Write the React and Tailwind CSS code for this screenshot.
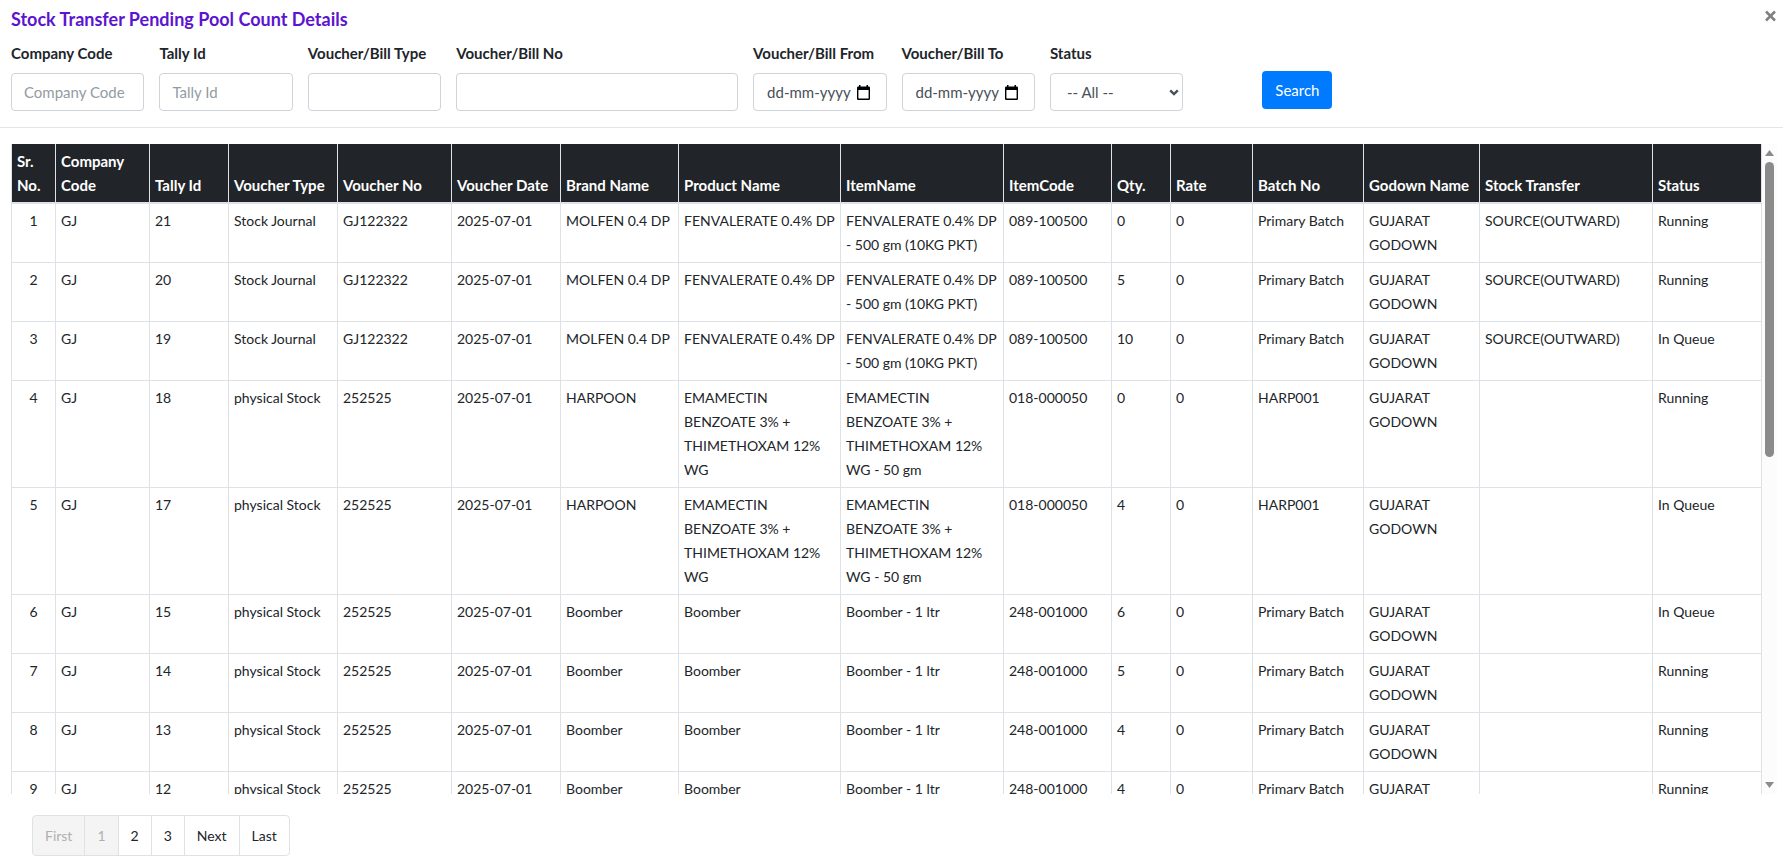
import React from "react";

const columns = [
  ["Sr. No.", "w-[44px]"],
  ["Company Code", "w-[94px]"],
  ["Tally Id", "w-[79px]"],
  ["Voucher Type", "w-[109px]"],
  ["Voucher No", "w-[114px]"],
  ["Voucher Date", "w-[109px]"],
  ["Brand Name", "w-[118px]"],
  ["Product Name", "w-[162px]"],
  ["ItemName", "w-[163px]"],
  ["ItemCode", "w-[108px]"],
  ["Qty.", "w-[59px]"],
  ["Rate", "w-[82px]"],
  ["Batch No", "w-[111px]"],
  ["Godown Name", "w-[116px]"],
  ["Stock Transfer", "w-[173px]"],
  ["Status", "w-[109px]"],
];

const FEN = ["MOLFEN 0.4 DP", "FENVALERATE 0.4% DP", "FENVALERATE 0.4% DP - 500 gm (10KG PKT)", "089-100500"];
const HARP = [
  "HARPOON",
  "EMAMECTIN BENZOATE 3% + THIMETHOXAM 12% WG",
  "EMAMECTIN BENZOATE 3% + THIMETHOXAM 12% WG - 50 gm",
  "018-000050",
];
const BOOM = ["Boomber", "Boomber", "Boomber - 1 ltr", "248-001000"];
const DATE = "2025-07-01";
const GODOWN = "GUJARAT GODOWN";
const OUT = "SOURCE(OUTWARD)";

const rows = [
  ["1", "GJ", "21", "Stock Journal", "GJ122322", DATE, ...FEN, "0", "0", "Primary Batch", GODOWN, OUT, "Running"],
  ["2", "GJ", "20", "Stock Journal", "GJ122322", DATE, ...FEN, "5", "0", "Primary Batch", GODOWN, OUT, "Running"],
  ["3", "GJ", "19", "Stock Journal", "GJ122322", DATE, ...FEN, "10", "0", "Primary Batch", GODOWN, OUT, "In Queue"],
  ["4", "GJ", "18", "physical Stock", "252525", DATE, ...HARP, "0", "0", "HARP001", GODOWN, "", "Running"],
  ["5", "GJ", "17", "physical Stock", "252525", DATE, ...HARP, "4", "0", "HARP001", GODOWN, "", "In Queue"],
  ["6", "GJ", "15", "physical Stock", "252525", DATE, ...BOOM, "6", "0", "Primary Batch", GODOWN, "", "In Queue"],
  ["7", "GJ", "14", "physical Stock", "252525", DATE, ...BOOM, "5", "0", "Primary Batch", GODOWN, "", "Running"],
  ["8", "GJ", "13", "physical Stock", "252525", DATE, ...BOOM, "4", "0", "Primary Batch", GODOWN, "", "Running"],
  ["9", "GJ", "12", "physical Stock", "252525", DATE, ...BOOM, "4", "0", "Primary Batch", GODOWN, "", "Running"],
];

const control =
  "h-[38px] w-full rounded border border-[#ced4da] bg-white px-3 text-[#495057] placeholder:text-[#939ba2] outline-none focus:border-[#80bdff]";

function Field({ id, label, className = "", children }) {
  return (
    <div className={`flex min-w-0 flex-col gap-2 ${className}`}>
      <label htmlFor={id} className="whitespace-nowrap font-bold leading-6">
        {label}
      </label>
      {children}
    </div>
  );
}

function CalendarIcon() {
  return (
    <svg width="13" height="15" viewBox="0 0 13 15" aria-hidden="true">
      <path
        d="M2 0h1.500v1.500h6V0H11v1.500h.8A1.200 1.200 0 0 1 13 2.700v11.100A1.200 1.200 0 0 1 11.800 15H1.200A1.200 1.200 0 0 1 0 13.800V2.700A1.200 1.200 0 0 1 1.200 1.500H2zM1.400 5v8.600h10.200V5z"
        fill="#000"
        fillRule="evenodd"
      />
    </svg>
  );
}

function DateField({ id, label }) {
  return (
    <Field id={id} label={label}>
      <div className="flex h-[38px] items-center rounded border border-[#ced4da] bg-white pr-3 pl-[13px]">
        <input
          id={id}
          type="text"
          placeholder="dd-mm-yyyy"
          className="w-full min-w-0 bg-transparent text-[15px] text-[#495057] outline-none placeholder:text-[#495057]"
        />
        <button type="button" aria-label={`Choose ${label}`} className="shrink-0 pr-1">
          <CalendarIcon />
        </button>
      </div>
    </Field>
  );
}

function SelectField() {
  return (
    <Field id="status" label="Status">
      <div className="grid items-center">
        <select id="status" className={`${control} col-start-1 row-start-1 appearance-none pl-4`}>
          <option>-- All --</option>
          <option>Running</option>
          <option>In Queue</option>
        </select>
        <svg
          className="pointer-events-none col-start-1 row-start-1 mr-1 justify-self-end"
          width="10"
          height="7"
          viewBox="0 0 10 7"
          aria-hidden="true"
        >
          <path d="M1.200 1.300 5 5 8.800 1.300" fill="none" stroke="#495057" strokeWidth="2.400" />
        </svg>
      </div>
    </Field>
  );
}

function ScrollRail() {
  return (
    <div className="flex w-[15px] shrink-0 flex-col items-center bg-[#fcfcfc] py-[6px]" aria-hidden="true">
      <svg width="9" height="6" viewBox="0 0 9 6">
        <path d="M4.500 0 9 6H0z" fill="#8b8b8b" />
      </svg>
      <div className="my-[6px] flex w-[9px] flex-1 flex-col">
        <div className="h-[48%] rounded-full bg-[#8b8b8b]" />
      </div>
      <svg width="9" height="6" viewBox="0 0 9 6">
        <path d="M4.500 6 9 0H0z" fill="#8b8b8b" />
      </svg>
    </div>
  );
}

const pages = [
  ["First", true],
  ["1", true],
  ["2", false],
  ["3", false],
  ["Next", false],
  ["Last", false],
];

export default function App() {
  return (
    <div className="flex h-screen flex-col overflow-hidden bg-white font-['Lato','Liberation_Sans',sans-serif] text-[15px] leading-6 text-[#212529]">
      <header className="flex items-start justify-between pt-[5px] pr-[7px] pl-[11px]">
        <h1 className="text-lg leading-7 font-bold text-[#5c14cf]">Stock Transfer Pending Pool Count Details</h1>
        <button type="button" aria-label="Close" className="mt-[5px]">
          <svg width="11" height="12" viewBox="0 0 11 12" aria-hidden="true">
            <path d="M1 1.500 10 10.500M10 1.500 1 10.500" stroke="#808080" strokeWidth="2.500" />
          </svg>
        </button>
      </header>

      <form
        className="grid grid-cols-12 gap-x-[15px] border-b border-[#e5e5e5] pt-2 pr-[6px] pb-4 pl-[11px]"
        onSubmit={(e) => e.preventDefault()}
      >
        <Field id="company" label="Company Code">
          <input id="company" type="text" placeholder="Company Code" className={control} />
        </Field>
        <Field id="tally" label="Tally Id">
          <input id="tally" type="text" placeholder="Tally Id" className={control} />
        </Field>
        <Field id="vtype" label="Voucher/Bill Type">
          <input id="vtype" type="text" className={control} />
        </Field>
        <Field id="vno" label="Voucher/Bill No" className="col-span-2">
          <input id="vno" type="text" className={control} />
        </Field>
        <DateField id="from" label="Voucher/Bill From" />
        <DateField id="to" label="Voucher/Bill To" />
        <SelectField />
        <div className="flex items-start pt-[30px] pl-16">
          <button type="submit" className="h-[38px] rounded bg-[#007bff] px-[13px] text-white">
            Search
          </button>
        </div>
      </form>

      <main className="mt-4 mr-[6px] ml-[11px] flex min-h-0 flex-1">
        <div className="min-w-0 flex-1 overflow-y-auto [scrollbar-width:none]">
          <table className="w-full table-fixed border-collapse">
            <thead className="bg-[#212529] text-white">
              <tr>
                {columns.map(([name, width]) => (
                  <th
                    key={name}
                    scope="col"
                    className={`${width} border-x border-b-2 border-[#dee2e6] px-[5px] py-[5px] text-left align-bottom font-bold`}
                  >
                    {name}
                  </th>
                ))}
              </tr>
            </thead>
            <tbody className="text-sm leading-6">
              {rows.map((row) => (
                <tr key={row[0]}>
                  {row.map((cell, i) => (
                    <td
                      key={i}
                      className={`border border-[#dee2e6] px-[5px] py-[5px] align-top ${i === 0 ? "text-center" : ""}`}
                    >
                      {cell}
                    </td>
                  ))}
                </tr>
              ))}
            </tbody>
          </table>
        </div>
        <ScrollRail />
      </main>

      <nav aria-label="Pagination" className="mt-[21px] mb-[7px] ml-8 flex text-sm">
        {pages.map(([label, disabled]) => (
          <button
            key={label}
            type="button"
            disabled={disabled}
            className="-ml-px h-[41px] border border-[#dee2e6] px-3 first:ml-0 first:rounded-l last:rounded-r disabled:bg-[#f4f4f4] disabled:text-[#b0b0b0]"
          >
            {label}
          </button>
        ))}
      </nav>
    </div>
  );
}
